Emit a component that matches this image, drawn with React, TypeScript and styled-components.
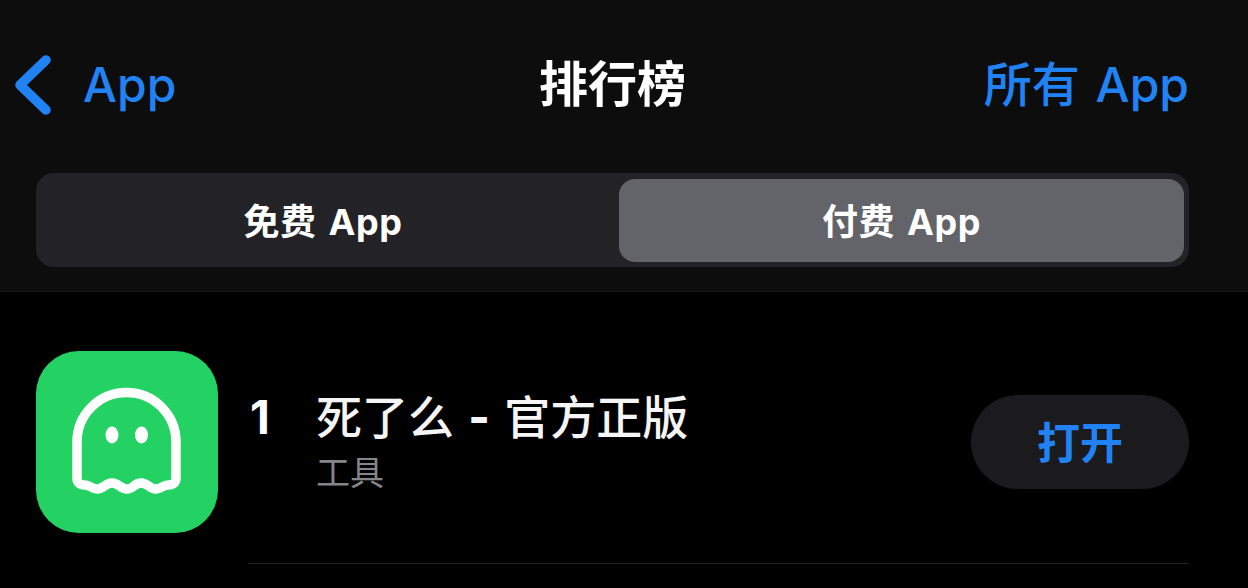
import React from "react";
import styled, { createGlobalStyle } from "styled-components";

const Global = createGlobalStyle`
  html, body { margin: 0; padding: 0; background: #000; }
  #root { width: 1248px; height: 588px; overflow: hidden; }
`;

const FONT = `Inter, "Noto Sans CJK SC", sans-serif`;
const BLUE = "#2183f3";

const Page = styled.div`
  width: 1248px;
  height: 588px;
  background: #000;
  font-family: ${FONT};
  display: flex;
  flex-direction: column;
  overflow: hidden;
`;

const Header = styled.header`
  height: 292px;
  box-sizing: border-box;
  background: #0d0d0e;
  border-bottom: 1px solid #1a1a1b;
  padding: 50px 59px 0 36px;
  display: flex;
  flex-direction: column;
`;

const NavBar = styled.nav`
  height: 70px;
  display: grid;
  grid-template-columns: 526px auto 1fr;
  align-items: center;
  margin-left: -22px;
  margin-bottom: 53px;
`;

const BackLink = styled.div`
  display: flex;
  align-items: center;
  gap: 31px;
  color: ${BLUE};
  font-size: 48px;
  line-height: 70px;
  font-weight: 500;
`;

const Chevron = styled.svg`
  width: 38px;
  height: 60px;
  margin-bottom: 6px;
  flex: none;
`;

const BackLabel = styled.span`
  margin-bottom: 6px;
`;

const NavTitle = styled.div`
  color: #fff;
  font-size: 49px;
  line-height: 70px;
  font-weight: 700;
  margin-bottom: 6px;
  margin-left: -1px;
`;

const NavAction = styled.div`
  justify-self: end;
  color: ${BLUE};
  font-size: 48px;
  line-height: 70px;
  font-weight: 500;
  word-spacing: 3px;
  margin-bottom: 6px;
`;

const Segmented = styled.div`
  height: 94px;
  width: 1153px;
  box-sizing: border-box;
  background: #232327;
  border-radius: 18px;
  padding: 6px 5px 5px;
  display: grid;
  grid-template-columns: 564px 1fr;
  column-gap: 14px;
`;

const Segment = styled.div<{ $active?: boolean }>`
  display: flex;
  align-items: center;
  justify-content: center;
  padding-bottom: 4px;
  border-radius: 16px;
  background: ${(p) => (p.$active ? "#636469" : "transparent")};
  color: #fff;
  font-size: 36px;
  font-weight: 700;
  letter-spacing: 0.5px;
  word-spacing: 3px;
`;

const Row = styled.section`
  display: grid;
  grid-template-columns: 182px 1fr;
  column-gap: 30px;
  padding: 59px 59px 0 36px;
`;

const AppIcon = styled.svg`
  width: 182px;
  height: 182px;
  display: block;
`;

const RowBody = styled.div`
  height: 212px;
  border-bottom: 1px solid #232325;
  display: flex;
  align-items: flex-start;
`;

const Rank = styled.div`
  width: 68px;
  margin-top: 38px;
  padding-left: 2px;
  box-sizing: border-box;
  color: #fff;
  font-size: 46px;
  line-height: 56px;
  font-weight: 700;
`;

const Info = styled.div`
  flex: 1;
  margin-top: 36px;
  display: flex;
  flex-direction: column;
`;

const AppName = styled.div`
  color: #f5f5f5;
  font-size: 46px;
  line-height: 60px;
  font-weight: 500;
  word-spacing: 2px;
`;

const Dash = styled.span`
  font-weight: 800;
`;

const Category = styled.div`
  color: #85858a;
  font-size: 34px;
  line-height: 48px;
  margin-top: 2px;
`;

const OpenButton = styled.div`
  width: 218px;
  height: 94px;
  box-sizing: border-box;
  padding-bottom: 4px;
  margin-top: 44px;
  border-radius: 47px;
  background: #1b1b1e;
  color: ${BLUE};
  font-size: 43px;
  font-weight: 700;
  display: flex;
  align-items: center;
  justify-content: center;
`;

export default function App() {
  return (
    <Page>
      <Global />
      <Header>
        <NavBar>
          <BackLink>
            <Chevron viewBox="0 0 38 60" fill="none">
              <path d="M32 5 L6 30 L32 55" stroke={BLUE} strokeWidth="9.5" strokeLinecap="round" strokeLinejoin="round" />
            </Chevron>
            <BackLabel>App</BackLabel>
          </BackLink>
          <NavTitle>排行榜</NavTitle>
          <NavAction>所有 App</NavAction>
        </NavBar>
        <Segmented>
          <Segment>免费 App</Segment>
          <Segment $active>付费 App</Segment>
        </Segmented>
      </Header>
      <Row>
        <AppIcon viewBox="0 0 182 182">
          <rect width="182" height="182" rx="43" fill="#24d264" />
          <path
            d="M41 91 a49.5 49.5 0 0 1 99 0 V127 Q140 134 132 134 C127 134 125 138 120 138 C113 138 112 132 105 132 C98 132 98 138 91 138 C84 138 83 132 76 132 C69 132 68 138 61 138 C56 138 54 134 49 134 Q41 134 41 127 Z"
            fill="none"
            stroke="#fff"
            strokeWidth="9.5"
            strokeLinejoin="round"
          />
          <ellipse cx="76" cy="84" rx="6.5" ry="8.5" fill="#fff" />
          <ellipse cx="105.5" cy="84" rx="6.5" ry="8.5" fill="#fff" />
        </AppIcon>
        <RowBody>
          <Rank>1</Rank>
          <Info>
            <AppName>
              死了么 <Dash>-</Dash> 官方正版
            </AppName>
            <Category>工具</Category>
          </Info>
          <OpenButton>打开</OpenButton>
        </RowBody>
      </Row>
    </Page>
  );
}
